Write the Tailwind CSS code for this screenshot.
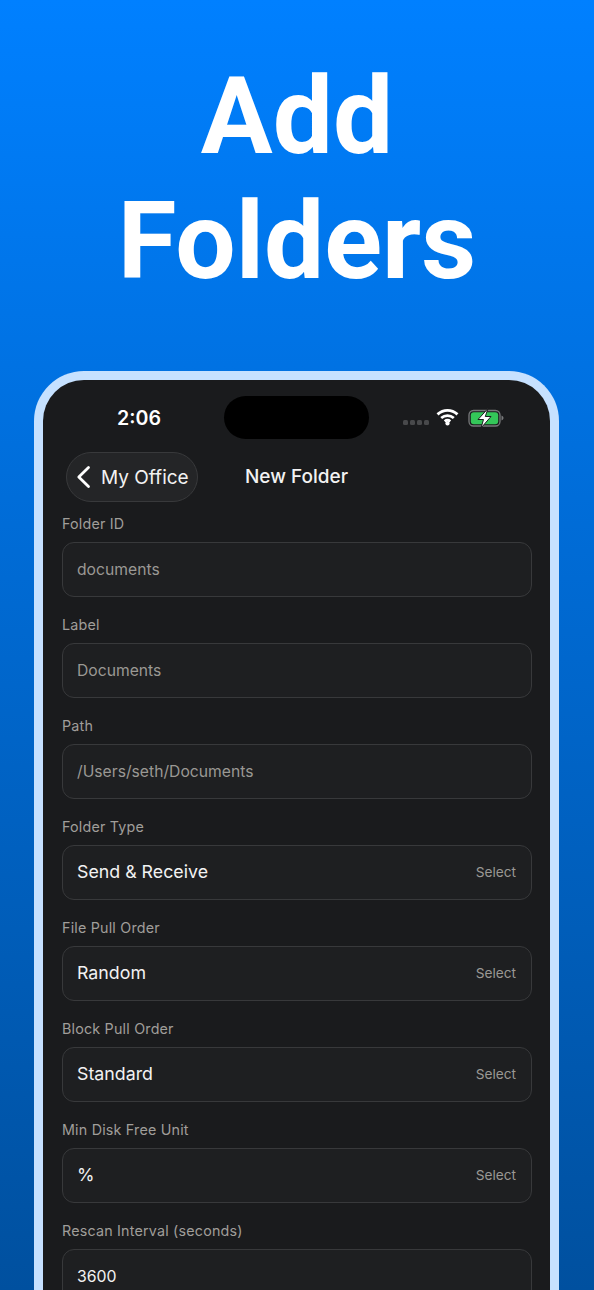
<!DOCTYPE html>
<html><head><meta charset="utf-8"><script src="https://cdn.jsdelivr.net/npm/@tailwindcss/browser@4"></script></head>
<body class="m-0">
<div class="w-[594px] h-[1290px] overflow-hidden bg-gradient-to-b from-[#0080ff] to-[#00509f] font-['Inter',sans-serif] flex flex-col items-center">
  <h1 class="mt-[54px] h-[317px] shrink-0 text-center text-white font-['Roboto',sans-serif] font-bold text-[107px] leading-[125px]">Add<br>Folders</h1>
  <div class="w-[525px] shrink-0 self-start ml-[34px] rounded-t-[50px] border-[9px] border-b-0 border-[#c6e1ff] bg-[#1a1b1d] h-[1000px] flex flex-col">
    <div class="relative h-[72px] shrink-0">
      <span class="absolute left-[74px] top-[25px] text-white font-semibold text-[19.6px] leading-[26px]">2:06</span>
      <div class="absolute left-[181px] top-[16px] w-[145px] h-[43px] rounded-full bg-black"></div>
      <div class="absolute left-[360px] top-[40px] flex gap-[2px]">
        <i class="w-[5px] h-[5px] rounded-[1.5px] bg-[#48494b]"></i><i class="w-[5px] h-[5px] rounded-[1.5px] bg-[#48494b]"></i><i class="w-[5px] h-[5px] rounded-[1.5px] bg-[#48494b]"></i><i class="w-[5px] h-[5px] rounded-[1.5px] bg-[#48494b]"></i>
      </div>
      <svg class="absolute left-[393px] top-[28px]" width="23" height="18" viewBox="0 0 23 18" fill="none" stroke="#fff" stroke-width="2.8"><path d="M1.5 6.4C7.5 .9 15.5 .9 21.5 6.4"/><path d="M5.2 10C8.9 6.7 14.100 6.700 17.800 10"/><path d="M8.700 13.300C10.500 11.900 12.500 11.900 14.300 13.300"/><circle cx="11.500" cy="15.500" r="2.100" fill="#fff" stroke="none"/></svg>
      <svg class="absolute left-[425px] top-[27px]" width="36" height="22" viewBox="0 0 36 22" fill="none"><rect x="1" y="3.500" width="31" height="15.500" rx="4.500" stroke="#77787a" stroke-width="1.300"/><rect x="2.800" y="5.200" width="27.400" height="12" rx="3" fill="#34c759"/><path d="M33.500 8.500v5c1.200-.4 2-1.400 2-2.500s-.8-2.100-2-2.500z" fill="#77787a"/><path d="M20 1.500 10 12.500h5.500L13 21l10-11.500h-5.700z" fill="#fff" stroke="#1a1b1d" stroke-width="1"/></svg>
    </div>
    <div class="relative h-[50px] shrink-0">
      <div class="absolute left-[23px] top-0 w-[132px] h-[50px] rounded-full bg-[#242527] border border-[#38393b] flex items-center">
        <svg class="ml-[9px]" width="16" height="24" viewBox="0 0 16 24" fill="none" stroke="#fff" stroke-width="2.800" stroke-linecap="round" stroke-linejoin="round"><path d="M12.500 2.500 2.800 12l9.700 9.500"/></svg>
        <span class="ml-[9px] text-[#f2f2f2] text-[19px] leading-none whitespace-nowrap">My Office</span>
      </div>
      <div class="absolute left-0 right-0 top-0 h-[50px] flex items-center justify-center text-[#f2f2f2] font-medium text-[19px]">New Folder</div>
    </div>
    <div class="px-[19px] pt-[11px] flex flex-col gap-[17px]">
      <div class="flex flex-col gap-[8px]"><label class="text-[14.3px] leading-[21px] text-[#a09e9a] tracking-[.2px]">Folder ID</label><div class="h-[55px] w-[470px] rounded-[12px] bg-[#1e1f21] border border-[#38393b] pl-[14px] pr-[15px] flex items-center justify-between text-[15.7px] text-[#9a9894]"><span>documents</span></div></div>
      <div class="flex flex-col gap-[8px]"><label class="text-[14.3px] leading-[21px] text-[#a09e9a] tracking-[.2px]">Label</label><div class="h-[55px] w-[470px] rounded-[12px] bg-[#1e1f21] border border-[#38393b] pl-[14px] pr-[15px] flex items-center justify-between text-[15.7px] text-[#9a9894]"><span>Documents</span></div></div>
      <div class="flex flex-col gap-[8px]"><label class="text-[14.3px] leading-[21px] text-[#a09e9a] tracking-[.2px]">Path</label><div class="h-[55px] w-[470px] rounded-[12px] bg-[#1e1f21] border border-[#38393b] pl-[14px] pr-[15px] flex items-center justify-between text-[15.7px] text-[#9a9894]"><span>/Users/seth/Documents</span></div></div>
      <div class="flex flex-col gap-[8px]"><label class="text-[14.3px] leading-[21px] text-[#a09e9a] tracking-[.2px]">Folder Type</label><div class="h-[55px] w-[470px] rounded-[12px] bg-[#1e1f21] border border-[#38393b] pl-[14px] pr-[15px] flex items-center justify-between text-[17.8px] text-[#f2f2f2]"><span>Send &amp; Receive</span><span class="text-[13.7px] text-[#9a9894]">Select</span></div></div>
      <div class="flex flex-col gap-[8px]"><label class="text-[14.3px] leading-[21px] text-[#a09e9a] tracking-[.2px]">File Pull Order</label><div class="h-[55px] w-[470px] rounded-[12px] bg-[#1e1f21] border border-[#38393b] pl-[14px] pr-[15px] flex items-center justify-between text-[17.8px] text-[#f2f2f2]"><span>Random</span><span class="text-[13.7px] text-[#9a9894]">Select</span></div></div>
      <div class="flex flex-col gap-[8px]"><label class="text-[14.3px] leading-[21px] text-[#a09e9a] tracking-[.2px]">Block Pull Order</label><div class="h-[55px] w-[470px] rounded-[12px] bg-[#1e1f21] border border-[#38393b] pl-[14px] pr-[15px] flex items-center justify-between text-[17.8px] text-[#f2f2f2]"><span>Standard</span><span class="text-[13.7px] text-[#9a9894]">Select</span></div></div>
      <div class="flex flex-col gap-[8px]"><label class="text-[14.3px] leading-[21px] text-[#a09e9a] tracking-[.2px]">Min Disk Free Unit</label><div class="h-[55px] w-[470px] rounded-[12px] bg-[#1e1f21] border border-[#38393b] pl-[14px] pr-[15px] flex items-center justify-between text-[17.8px] text-[#f2f2f2]"><span>%</span><span class="text-[13.7px] text-[#9a9894]">Select</span></div></div>
      <div class="flex flex-col gap-[8px]"><label class="text-[14.3px] leading-[21px] text-[#a09e9a] tracking-[.2px]">Rescan Interval (seconds)</label><div class="h-[55px] w-[470px] rounded-[12px] bg-[#1e1f21] border border-[#38393b] pl-[14px] pr-[15px] flex items-center justify-between text-[15.8px] text-[#f2f2f2]"><span>3600</span></div></div>
    </div>
  </div>
</div>
</body></html>
